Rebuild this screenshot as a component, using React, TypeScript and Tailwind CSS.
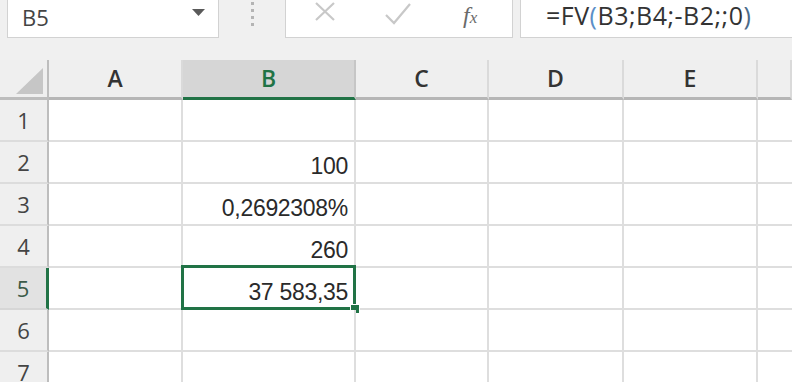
import React from "react";

const cols = ["A", "B", "C", "D", "E", ""];
const rows = [
  { n: 1, b: "" },
  { n: 2, b: "100" },
  { n: 3, b: "0,2692308%" },
  { n: 4, b: "260" },
  { n: 5, b: "37 583,35" },
  { n: 6, b: "" },
  { n: 7, b: "" },
];

function NameBox() {
  return (
    <div className="ml-[7px] w-[212px] h-full bg-white border border-t-0 border-[#d2d2d2] flex items-center justify-between pl-[14px] pr-[13px]">
      <span className="text-[22px] text-[#444] leading-none -mt-[4px]">B5</span>
      <svg width="13" height="8" viewBox="0 0 13 8" className="-mt-[12px]">
        <path d="M0 0h13L6.5 7z" fill="#5a5a5a" />
      </svg>
    </div>
  );
}

function FormulaButtons() {
  return (
    <div className="w-[228px] h-full bg-white border border-t-0 border-[#d2d2d2] flex items-center relative">
      <svg width="22" height="20" viewBox="0 0 22 20" className="absolute left-[28px] top-[2px]">
        <path d="M2 1l18 17M20 1L2 18" stroke="#c8c8c8" strokeWidth="2.2" />
      </svg>
      <svg width="28" height="24" viewBox="0 0 28 24" className="absolute left-[98px] top-[2px]">
        <path d="M2 13l8 8L26 2" stroke="#c8c8c8" strokeWidth="2.2" fill="none" />
      </svg>
      <span className="absolute left-[177px] top-[3px] font-['Liberation_Serif',serif] italic text-[#6a6a6a] text-[24px] leading-none">
        f<span className="text-[17px]">x</span>
      </span>
    </div>
  );
}

export default function App() {
  return (
    <div className="w-[792px] h-[382px] overflow-hidden bg-[#f0f0f0] font-['Open_Sans',sans-serif] flex flex-col">
      {/* formula bar */}
      <div className="h-[38px] flex shrink-0">
        <NameBox />
        <div className="w-[66px] flex justify-center">
          <div className="flex flex-col gap-[4px] pt-[2px]">
            <span className="w-[3px] h-[3px] bg-[#b4b4b4]" />
            <span className="w-[3px] h-[3px] bg-[#b4b4b4]" />
            <span className="w-[3px] h-[3px] bg-[#b4b4b4]" />
            <span className="w-[3px] h-[3px] bg-[#b4b4b4]" />
          </div>
        </div>
        <FormulaButtons />
        <div className="ml-[7px] flex-1 h-full bg-white border border-t-0 border-r-0 border-[#d2d2d2] pl-[25px] flex items-center">
          <span className="text-[25px] text-[#333] leading-none -mt-[6px] tracking-[0.5px]">
            =FV<span className="text-[#5b8fc7]">(</span>B3;B4;-B2;;0<span className="text-[#4a6a8a]">)</span>
          </span>
        </div>
      </div>

      <div className="h-[22px] shrink-0" />

      {/* sheet */}
      <div className="grid grid-cols-[49px_134px_173px_133px_135px_134px_1fr] text-[#444]">
        {/* header row */}
        <div className="h-[40px] border-r-2 border-b-[3px] border-[#bdbdbd] bg-[#efefef] relative">
          <svg width="27" height="26" viewBox="0 0 27 26" className="absolute left-[16px] top-[8px]">
            <path d="M27 0v26H0z" fill="#c6c6c6" />
          </svg>
        </div>
        {cols.map((c) =>
          c === "B" ? (
            <div
              key={c}
              className="h-[40px] bg-[#d6d6d6] border-r-2 border-[#c6c6c6] border-b-[3px] border-b-[#217346] flex items-center justify-center text-[23px] text-[#217346] font-semibold"
            >
              {c}
            </div>
          ) : (
            <div
              key={c || "F"}
              className="h-[40px] bg-[#efefef] border-r-2 border-[#dadada] border-b-[3px] border-b-[#b6b6b6] flex items-center justify-center text-[23px] text-[#333] font-semibold"
            >
              {c}
            </div>
          )
        )}

        {/* body rows */}
        {rows.map((r) => (
          <React.Fragment key={r.n}>
            <div
              className={
                r.n === 5
                  ? "h-[42px] bg-[#e2e2e2] border-r-[3px] border-[#217346] border-b-2 border-b-[#d6d6d6] flex items-center justify-center text-[22px] text-[#3b5a48]"
                  : "h-[42px] bg-[#efefef] border-r-2 border-[#bdbdbd] border-b-2 border-b-[#dcdcdc] flex items-center justify-center text-[22px] text-[#444]"
              }
            >
              {r.n}
            </div>
            <div className="h-[42px] bg-white border-r-2 border-b-2 border-[#dedede]" />
            <div className="h-[42px] bg-white border-r-2 border-b-2 border-[#dedede] relative flex items-end justify-end pr-[6px] pb-[4px]">
              <span className="font-['Liberation_Sans',sans-serif] text-[23px] text-[#2a2a2a] leading-none tracking-[-0.3px]">
                {r.b}
              </span>
              {r.n === 5 && (
                <>
                  <div className="absolute -left-[2px] -top-[3px] -right-[2px] -bottom-[2px] border-[3px] border-[#217346]" />
                  <div className="absolute -right-[6px] -bottom-[6px] w-[10px] h-[10px] bg-[#217346] border border-white" />
                </>
              )}
            </div>
            <div className="h-[42px] bg-white border-r-2 border-b-2 border-[#dedede]" />
            <div className="h-[42px] bg-white border-r-2 border-b-2 border-[#dedede]" />
            <div className="h-[42px] bg-white border-r-2 border-b-2 border-[#dedede]" />
            <div className="h-[42px] bg-white border-b-2 border-[#dedede]" />
          </React.Fragment>
        ))}
      </div>
    </div>
  );
}
